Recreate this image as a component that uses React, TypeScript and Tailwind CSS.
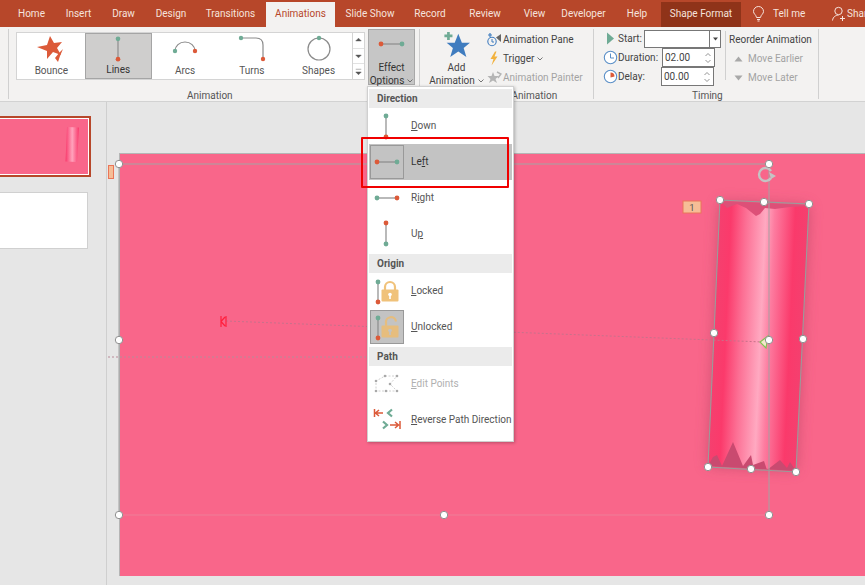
import React from "react";

const GREEN = "#6fab95";
const ORANGE = "#dc5a39";
const LINE = "#8b8b8b";

const tabs = [
  { t: "Home", w: 47 },
  { t: "Insert", w: 47 },
  { t: "Draw", w: 43 },
  { t: "Design", w: 52 },
  { t: "Transitions", w: 67 },
];
const tabs2 = [
  { t: "Slide Show", w: 70 },
  { t: "Record", w: 50 },
  { t: "Review", w: 60 },
  { t: "View", w: 39 },
  { t: "Developer", w: 59 },
  { t: "Help", w: 48 },
];

function Seg({ x1, y1, x2, y2, a, b, w = 1.2, r = 2.4 }: { x1: number; y1: number; x2: number; y2: number; a: string; b: string; w?: number; r?: number }) {
  return (
    <>
      <line x1={x1} y1={y1} x2={x2} y2={y2} stroke={LINE} strokeWidth={w} />
      <circle cx={x1} cy={y1} r={r} fill={a} />
      <circle cx={x2} cy={y2} r={r} fill={b} />
    </>
  );
}

function GalleryItem({ label, selected, w, children }: { label: string; selected?: boolean; w: number; children: React.ReactNode }) {
  return (
    <div
      style={{ width: w }}
      className={`flex h-[46px] flex-col items-center justify-between pb-[2px] pt-[1px] ${selected ? "border border-[#a5a5a5] bg-[#cfcecd] text-[#333]" : "text-[#555]"}`}
    >
      <svg width="36" height="29" viewBox="0 0 36 29">{children}</svg>
      <span className="leading-[13px]">{label}</span>
    </div>
  );
}

function MenuHeader({ children }: { children: React.ReactNode }) {
  return <div className="mx-[1px] flex h-[19px] items-center bg-[#ebebeb] pl-[8px] font-bold text-[#555]">{children}</div>;
}

function MenuRow({ label, icon, selected, boxed, disabled }: { label: React.ReactNode; icon: React.ReactNode; selected?: boolean; boxed?: boolean; disabled?: boolean }) {
  return (
    <div className={`mx-[1px] flex h-[36px] items-center ${selected ? "bg-[#c3c3c3] text-[#333]" : disabled ? "text-[#b0b0b0]" : "text-[#555]"}`}>
      <div className={`ml-[1px] flex h-[34px] w-[34px] shrink-0 items-center justify-center ${boxed ? "border border-[#999] bg-[#c3c3c3]" : "border border-transparent"}`}>
        <svg width="30" height="30" viewBox="0 0 30 30">{icon}</svg>
      </div>
      <span className="ml-[7px] pb-[2px]">{label}</span>
    </div>
  );
}

function Lock({ open, faded }: { open?: boolean; faded?: boolean }) {
  const c = faded ? "#e6bd7e" : "#f0c27a";
  return (
    <g>
      <path d={open ? "M14 14 V11 a5 5 0 0 1 10 -1.500" : "M13 14 V11 a5 5 0 0 1 10 0 V14"} fill="none" stroke={c} strokeWidth="2.200" />
      <rect x="9.500" y="13.500" width="17" height="12" rx="1" fill={c} />
      <circle cx="18" cy="18.500" r="1.800" fill={faded ? "#c3c3c3" : "#fff"} />
      <rect x="17.200" y="19" width="1.600" height="4" fill={faded ? "#c3c3c3" : "#fff"} />
    </g>
  );
}

function Chevron({ color = "#666" }: { color?: string }) {
  return (
    <svg width="6" height="4" viewBox="0 0 6 4" className="ml-[3px] inline-block">
      <path d="M0.5 0.5 L3 3 L5.5 0.5" fill="none" stroke={color} strokeWidth="0.9" />
    </svg>
  );
}

function Spin() {
  return (
    <svg width="8" height="14" viewBox="0 0 8 14" className="shrink-0">
      <path d="M1.5 5 L4 2.500 L6.500 5 M1.500 9 L4 11.500 L6.500 9" fill="none" stroke="#888" strokeWidth="0.9" />
    </svg>
  );
}

function Handle({ x, y }: { x: number; y: number }) {
  return <circle cx={x} cy={y} r={3.7} fill="#fff" stroke="#8f8f8f" strokeWidth="1" />;
}

export default function App() {
  return (
    <div className="relative h-[585px] w-[865px] overflow-hidden bg-[#e6e6e6] text-[10px] text-[#444]" style={{ fontFamily: 'Roboto, "Liberation Sans", sans-serif' }}>
      {/* Tab bar */}
      <div className="flex h-[27px] items-end overflow-hidden bg-[#b7472a] pl-[8px] text-[#f6e3dd]">
        {tabs.map((t) => (
          <div key={t.t} style={{ width: t.w }} className="flex h-[25px] shrink-0 items-center justify-center pb-[2px]">{t.t}</div>
        ))}
        <div className="ml-[2px] flex h-[25px] w-[69px] shrink-0 items-center justify-center bg-[#f3f2f1] pb-[2px] text-[#b7472a]">Animations</div>
        {tabs2.map((t) => (
          <div key={t.t} style={{ width: t.w }} className="flex h-[25px] shrink-0 items-center justify-center pb-[2px]">{t.t}</div>
        ))}
        <div className="flex h-[25px] w-[80px] shrink-0 items-center justify-center bg-[#8f3319] pb-[2px]">Shape Format</div>
        <div className="flex h-[25px] shrink-0 items-center pb-[2px] pl-[11px]">
          <svg width="13" height="16" viewBox="0 0 13 16" className="shrink-0">
            <path d="M4.500 11.500 C4 8.500 1.500 8 1.500 5.500 a5 5 0 0 1 10 0 C11.500 8 9 8.500 8.500 11.500 Z M5 13.500 H8 M5.500 15 H7.500" fill="none" stroke="#f6e3dd" strokeWidth="1" />
          </svg>
          <span className="ml-[8px] w-[31px] shrink-0 whitespace-nowrap">Tell me</span>
          <svg width="14" height="16" viewBox="0 0 14 16" className="ml-[28px] shrink-0">
            <circle cx="6.500" cy="5" r="3.700" fill="none" stroke="#f6e3dd" />
            <path d="M0.500 14.500 C1 10.500 4 9.200 6.500 9.200 M10.500 10 V15 M8 12.500 H13" fill="none" stroke="#f6e3dd" />
          </svg>
          <span className="ml-[1px] whitespace-nowrap">Share</span>
        </div>
      </div>

      {/* Ribbon */}
      <div className="flex h-[75px] border-b border-[#d2d2d2] bg-[#f3f2f1] pl-[8px]">
        {/* Animation group */}
        <div className="mt-[2px] flex h-[70px] w-[412px] flex-col border-l border-r border-[#d0d0d0]">
          <div className="flex flex-1 items-start">
            <div className="ml-[7px] mt-[3px] flex h-[48px] w-[337px] items-center border border-[#d4d4d4] bg-white pl-[1px]">
              <GalleryItem label="Bounce" w={67}>
                <path d="M17 2 L21 9 L29 8 L24 14 L28 21 L20 18 L14 25 L14 17 L4 13 L14 11 Z" fill="#dc5a39" />
                <path d="M22 24 L26 19 L30 15 L27 22 L25 28 Z" fill="#dc5a39" />
              </GalleryItem>
              <GalleryItem label="Lines" selected w={67}>
                <Seg x1={18} y1={4} x2={18} y2={25} a={GREEN} b={ORANGE} />
              </GalleryItem>
              <GalleryItem label="Arcs" w={67}>
                <path d="M8 17 A10 9 0 0 1 28 17" fill="none" stroke={LINE} strokeWidth="1.200" />
                <circle cx="8" cy="17" r="2.200" fill={GREEN} />
                <circle cx="28" cy="17" r="2.200" fill={ORANGE} />
              </GalleryItem>
              <GalleryItem label="Turns" w={67}>
                <path d="M7 4 H22 Q29 4 29 11 V25" fill="none" stroke={LINE} strokeWidth="1.200" />
                <circle cx="7" cy="4" r="2.200" fill={GREEN} />
                <circle cx="29" cy="25" r="2.200" fill={ORANGE} />
              </GalleryItem>
              <GalleryItem label="Shapes" w={67}>
                <circle cx="18" cy="15" r="11" fill="none" stroke={LINE} strokeWidth="1.200" />
                <circle cx="18" cy="4" r="2.200" fill={GREEN} />
              </GalleryItem>
            </div>
            <div className="mt-[3px] flex h-[48px] w-[12px] flex-col border border-l-0 border-[#d4d4d4] bg-white text-[#555]">
              {["M3 7 L6 4 L9 7 Z", "M3 5 L6 8 L9 5 Z", "M3 3 H9 M3 6 L6 9 L9 6 Z"].map((d, i) => (
                <div key={i} className="flex flex-1 items-center justify-center border-b border-[#e2e2e2] last:border-b-0">
                  <svg width="12" height="12" viewBox="0 0 12 12"><path d={d} fill="#555" stroke="#555" strokeWidth="0.5" /></svg>
                </div>
              ))}
            </div>
            <div className="ml-[3px] flex h-[56px] w-[47px] flex-col items-center border border-[#a8a8a8] bg-[#c6c6c6] pt-[2px] text-[#333]">
              <svg width="30" height="24" viewBox="0 0 30 24" className="mb-[5px] shrink-0"><Seg x1={4} y1={12} x2={25} y2={12} a={ORANGE} b={GREEN} /></svg>
              <span className="leading-[13px]">Effect</span>
              <span className="whitespace-nowrap leading-[13px]">Options<Chevron /></span>
            </div>
          </div>
          <div className="-mb-[3px] ml-[178px] h-[12px] leading-[12px] text-[#555]">Animation</div>
        </div>

        {/* Advanced animation group */}
        <div className="mt-[2px] flex h-[70px] w-[174px] flex-col border-r border-[#d0d0d0]">
          <div className="flex flex-1 items-start">
            <div className="ml-[9px] flex w-[55px] shrink-0 flex-col items-center">
              <svg width="27" height="26" viewBox="0 0 30 29" className="mt-[2px] shrink-0">
                <path d="M17 3 L21 13 L30 13 L23 19 L26 29 L17 23 L8 29 L11 19 L4 13 L13 13 Z" fill="#3f7cbf" />
                <path d="M6 1 V10 M1.500 5.500 H10.500" stroke={GREEN} strokeWidth="3" />
              </svg>
              <span className="mt-[4px] leading-[13px]">Add</span>
              <span className="whitespace-nowrap leading-[13px]">Animation<Chevron /></span>
            </div>
            <div className="ml-[3px] mt-[1px] flex flex-col">
              <div className="flex h-[19px] items-center">
                <svg width="15" height="15" viewBox="0 0 15 15" className="mr-[1px] shrink-0">
                  <circle cx="5" cy="9.500" r="4.200" fill="none" stroke="#3f7cbf" strokeWidth="1.100" />
                  <path d="M5 7 V10 H7" fill="none" stroke="#3f7cbf" />
                  <path d="M3 1 V5 M1 3 H5" stroke="#3f7cbf" strokeWidth="1.200" />
                  <path d="M9 5.500 L14 2 V10 Z" fill="#666" />
                </svg>
                <span className="whitespace-nowrap">Animation Pane</span>
              </div>
              <div className="flex h-[19px] items-center">
                <svg width="15" height="15" viewBox="0 0 15 15" className="mr-[1px] shrink-0">
                  <path d="M8 0.500 L3.500 8 H6.500 L4.500 14.500 L10.500 5.500 H7.500 L9.500 0.500 Z" fill="#f2b23e" />
                </svg>
                <span>Trigger</span><Chevron />
              </div>
              <div className="flex h-[19px] items-center text-[#a3a3a3]">
                <svg width="15" height="15" viewBox="0 0 15 15" className="mr-[1px] shrink-0">
                  <path d="M6 2 L7.500 6 L12 6 L8.500 9 L10 13 L6 10.500 L2 13 L3.500 9 L0.500 6 L4.500 6 Z" fill="#b5b5b5" />
                  <path d="M10 2 L14 4 L11 8" fill="none" stroke="#b5b5b5" strokeWidth="1.400" />
                </svg>
                <span className="whitespace-nowrap">Animation Painter</span>
              </div>
            </div>
          </div>
          <div className="-mb-[3px] ml-[45px] h-[12px] whitespace-nowrap leading-[12px] text-[#555]">Advanced Animation</div>
        </div>

        {/* Timing group */}
        <div className="mt-[2px] flex h-[70px] w-[225px] flex-col border-r border-[#d0d0d0]">
          <div className="flex flex-1 items-start">
            <div className="ml-[9px] flex w-[122px] shrink-0 flex-col">
              <div className="flex h-[19px] items-center">
                <svg width="15" height="15" viewBox="0 0 15 15" className="shrink-0"><path d="M4 1.500 L11 7.500 L4 13.500 Z" fill={GREEN} /></svg>
                <span className="w-[26px] shrink-0">Start:</span>
                <div className="flex h-[18px] w-[77px] shrink-0 items-center justify-end border border-[#777] bg-white">
                  <div className="flex h-full w-[11px] items-center justify-center border-l border-[#777]">
                    <svg width="7" height="4" viewBox="0 0 7 4"><path d="M1 0.500 L3.500 3.500 L6 0.500 Z" fill="#444" /></svg>
                  </div>
                </div>
              </div>
              <div className="flex h-[19px] items-center">
                <svg width="15" height="15" viewBox="0 0 15 15" className="shrink-0">
                  <circle cx="7.500" cy="7.500" r="6.200" fill="#fff" stroke="#5a8fc7" strokeWidth="1.100" />
                  <path d="M7.500 3.500 V8 H11" fill="none" stroke="#5a8fc7" />
                </svg>
                <span className="w-[44px] shrink-0">Duration:</span>
                <div className="flex h-[19px] w-[53px] shrink-0 items-center justify-between border border-[#777] bg-white pl-[2px] pr-[2px]">
                  <span>02.00</span><Spin />
                </div>
              </div>
              <div className="flex h-[19px] items-center">
                <svg width="15" height="15" viewBox="0 0 15 15" className="shrink-0">
                  <circle cx="7.500" cy="7.500" r="6.200" fill="#fff" stroke="#5a8fc7" strokeWidth="1.100" />
                  <path d="M7.500 3.500 A4 4 0 0 1 11.500 7.500 L7.500 8.500 Z" fill="#dc5a39" />
                </svg>
                <span className="w-[43px] shrink-0">Delay:</span>
                <div className="flex h-[19px] w-[53px] shrink-0 items-center justify-between border border-[#777] bg-white pl-[2px] pr-[2px]">
                  <span>00.00</span><Spin />
                </div>
              </div>
            </div>
            <div className="mt-[2px] h-[49px] w-px shrink-0 bg-[#d0d0d0]" />
            <div className="ml-[3px] mt-[1px] flex flex-col">
              <div className="flex h-[19px] items-center whitespace-nowrap">Reorder Animation</div>
              <div className="flex h-[19px] items-center whitespace-nowrap pl-[5px] text-[#a3a3a3]">
                <svg width="9" height="6" viewBox="0 0 9 6" className="shrink-0"><path d="M0.500 5.500 L4.500 0.500 L8.500 5.500 Z" fill="#a8a8a8" /></svg>
                <span className="ml-[5px]">Move Earlier</span>
              </div>
              <div className="flex h-[19px] items-center whitespace-nowrap pl-[5px] text-[#a3a3a3]">
                <svg width="9" height="6" viewBox="0 0 9 6" className="shrink-0"><path d="M0.500 0.500 L4.500 5.500 L8.500 0.500 Z" fill="#a8a8a8" /></svg>
                <span className="ml-[5px]">Move Later</span>
              </div>
            </div>
          </div>
          <div className="-mb-[3px] ml-[98px] h-[12px] leading-[12px] text-[#555]">Timing</div>
        </div>
      </div>

      {/* Body */}
      <div className="flex h-[483px]">
        <div className="w-[107px] shrink-0 overflow-hidden border-r border-[#cfcfcf] pt-[14px]">
          <div className="flex h-[61px] w-[91px] items-center justify-end border-[2px] border-l-0 border-[#b7472a] bg-white pr-[1px]">
            <div className="flex h-[55px] w-[88px] bg-[#f9668a]">
              <svg width="88" height="55" viewBox="0 0 88 55">
                <defs>
                  <linearGradient id="mini" x1="0" x2="1" y1="0" y2="0">
                    <stop offset="0" stopColor="#f93a6c" />
                    <stop offset="0.5" stopColor="#ffa3bc" />
                    <stop offset="1" stopColor="#f93a6c" />
                  </linearGradient>
                </defs>
                <path d="M67 8 L79 8.500 L77 43 L65.500 42.500 Z" fill="url(#mini)" />
              </svg>
            </div>
          </div>
          <div className="mt-[15px] h-[57px] w-[88px] border border-l-0 border-[#d0d0d0] bg-white" />
        </div>

        <div className="flex-1 pl-[12px] pt-[51px]">
          <div className="h-[423px] w-[746px] border-l border-t border-[#b5b5b5] bg-[#f9668a]">
            <svg width="746" height="423" viewBox="119 153 746 423" className="-ml-px -mt-px overflow-visible">
              <defs>
                <linearGradient id="roll" gradientUnits="userSpaceOnUse" x1="714" y1="336" x2="803" y2="340">
                  <stop offset="0" stopColor="#f5406f" />
                  <stop offset="0.13" stopColor="#fb3a6b" />
                  <stop offset="0.3" stopColor="#fc6f94" />
                  <stop offset="0.52" stopColor="#ffa9c1" />
                  <stop offset="0.62" stopColor="#fd7ca0" />
                  <stop offset="0.85" stopColor="#fa3a6b" />
                  <stop offset="1" stopColor="#f4406f" />
                </linearGradient>
                <filter id="blur" x="-30%" y="-10%" width="160%" height="120%">
                  <feGaussianBlur stdDeviation="7" />
                </filter>
              </defs>
              <path d="M720 202 L809 206 L796 470 L708 466 Z" fill="#a83c5c" opacity="0.55" filter="url(#blur)" />
              <path d="M720 202 L809 206 L796 470 L708 466 Z" fill="url(#roll)" />
              <path d="M720 201 L809 205 L808 206 L790 207 L775 209 L765 208 L760 214 L756 216 L746 208 L737 204 L727 208 Z" fill="#dd5078" />
              <path d="M708 466 L713 457 L717 455 L722 466 L733 442 L738 454 L743 466 L751 455 L753 465 L764 461 L767 470 L780 460 L787 468 L790 462 L796 471 Z" fill="#c94a70" />
              <line x1="119" y1="164" x2="769" y2="164" stroke="#a3a3a3" strokeWidth="1.200" />
              <line x1="119" y1="164" x2="119" y2="515" stroke="#a3a3a3" strokeWidth="1" />
              <line x1="119" y1="515" x2="769" y2="515" stroke="#ee7f98" strokeWidth="1" />
              <line x1="769" y1="164" x2="769" y2="515" stroke="#a3a3a3" strokeWidth="1" />
              <line x1="108" y1="357" x2="368" y2="357" stroke="#b88a98" strokeWidth="1" strokeDasharray="2 2" />
              <line x1="226" y1="321" x2="763" y2="342" stroke="#c8718a" strokeWidth="1" strokeDasharray="2 2" />
              <path d="M720 200 L809 204 L796 472 L708 467 Z" fill="none" stroke="#9b9b9b" strokeWidth="1.100" />
              <path d="M771 178 A6.500 6.500 0 1 1 771 171" fill="none" stroke="#c4c4c4" strokeWidth="2.400" />
              <path d="M769 172 L776 176 L771 179 Z" fill="#c4c4c4" />
              <path d="M226 316 V327 M221 316 V327 M225 317 L221 321.500 L225 326" fill="none" stroke="#ff1f3d" strokeWidth="1.200" />
              <path d="M768 336 L760 342 L766 348 Z" fill="#f3e9c9" stroke="#7fc452" strokeWidth="1.200" />
              <rect x="683" y="201" width="18" height="12" fill="#f6bd96" stroke="#ea7558" />
              <text x="692" y="210.500" textAnchor="middle" fontSize="9.500" fill="#555" fontFamily="Roboto">1</text>
              <rect x="108.500" y="165.500" width="5" height="13" fill="#f6bd96" stroke="#ea7558" />
              <Handle x={119} y={164} />
              <Handle x={769} y={164} />
              <Handle x={119} y={340} />
              <Handle x={119} y={515} />
              <Handle x={444} y={515} />
              <Handle x={769} y={515} />
              <Handle x={720} y={200} />
              <Handle x={764} y={202} />
              <Handle x={809} y={204} />
              <Handle x={714} y={333} />
              <Handle x={803} y={339} />
              <Handle x={769} y={340} />
              <Handle x={708} y={467} />
              <Handle x={751} y={469} />
              <Handle x={796} y={472} />
            </svg>
          </div>
        </div>
      </div>

      {/* Effect Options menu */}
      <div className="absolute left-[367px] top-[86px] flex h-[356px] w-[147px] flex-col border border-[#d0d0d0] bg-white pt-[2px] shadow-[1px_1px_3px_rgba(0,0,0,0.25)]">
        <MenuHeader>Direction</MenuHeader>
        <MenuRow label={<><u>D</u>own</>} icon={<Seg x1={14} y1={5} x2={14} y2={26} a={GREEN} b={ORANGE} />} />
        <MenuRow label={<>Le<u>f</u>t</>} selected boxed icon={<Seg x1={5} y1={15} x2={25} y2={15} a={ORANGE} b={GREEN} />} />
        <MenuRow label={<>R<u>i</u>ght</>} icon={<Seg x1={5} y1={15} x2={25} y2={15} a={GREEN} b={ORANGE} />} />
        <MenuRow label={<>U<u>p</u></>} icon={<Seg x1={14} y1={4} x2={14} y2={25} a={ORANGE} b={GREEN} />} />
        <div className="h-[2px]" />
        <MenuHeader>Origin</MenuHeader>
        <MenuRow
          label={<><u>L</u>ocked</>}
          icon={<><Lock /><Seg x1={6} y1={6} x2={6} y2={26} a={GREEN} b={ORANGE} /></>}
        />
        <MenuRow
          label={<><u>U</u>nlocked</>}
          boxed
          icon={<><Lock open faded /><Seg x1={6} y1={6} x2={6} y2={26} a={GREEN} b={ORANGE} /></>}
        />
        <div className="h-[2px]" />
        <MenuHeader>Path</MenuHeader>
        <MenuRow
          label={<><u>E</u>dit Points</>}
          disabled
          icon={
            <g>
              <path d="M13 7 H25 L18 15 L25 22 H4 V12 Z" fill="none" stroke="#c4c4c4" strokeWidth="0.800" strokeDasharray="2 1.500" />
              {[[13, 7], [25, 7], [18, 15], [25, 22], [4, 22], [4, 12], [14, 22]].map(([x, y], i) => (
                <circle key={i} cx={x} cy={y} r="1.300" fill="#a9a9a9" />
              ))}
            </g>
          }
        />
        <MenuRow
          label={<span className="whitespace-nowrap"><u>R</u>everse Path Direction</span>}
          icon={
            <g fill="none">
              <path d="M2.500 4 V12 M11 8 H3.500 M7 5 L3.500 8 L7 11" stroke={ORANGE} strokeWidth="1.500" />
              <path d="M20 4.500 L16 8 L20 11.500" stroke={GREEN} strokeWidth="2.200" />
              <path d="M11 16.500 L15 20 L11 23.500" stroke={GREEN} strokeWidth="2.200" />
              <path d="M28 16 V24 M18 20 H26.500 M23 17 L26.500 20 L23 23" stroke={ORANGE} strokeWidth="1.500" />
            </g>
          }
        />
      </div>

      {/* Red highlight */}
      <div className="absolute left-[361px] top-[137px] h-[51px] w-[148px] rounded-[1px] border-[2px] border-[#f00000]" />
    </div>
  );
}
